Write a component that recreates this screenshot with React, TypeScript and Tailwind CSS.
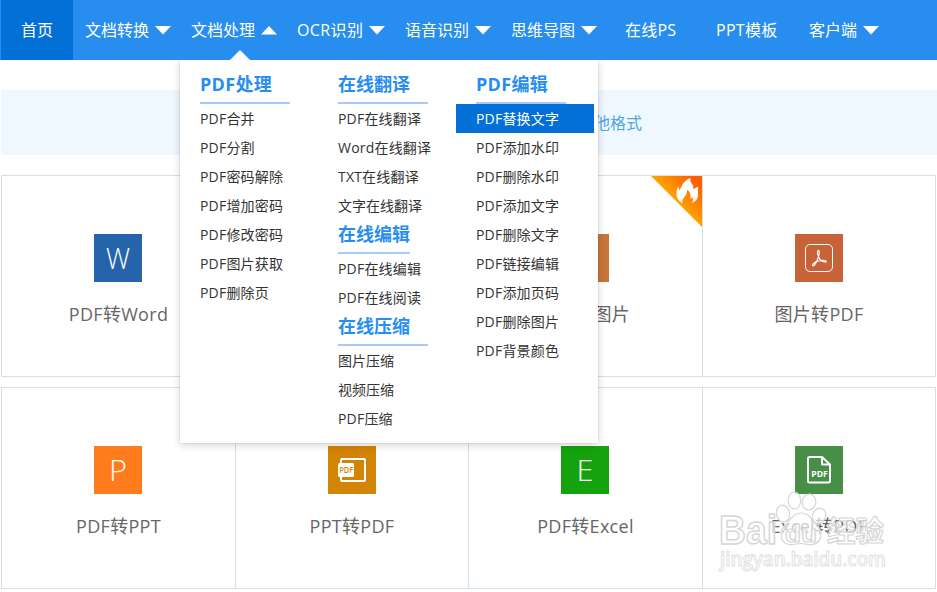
import React from "react";

const navItems = [
  { label: "文档转换", arrow: "down", className: "w-[106px] pl-2.5" },
  { label: "文档处理", arrow: "up", className: "w-[106px] pl-2.5" },
  { label: "OCR识别", arrow: "down", className: "w-[108px] pl-2.5 tracking-[0.4px]" },
  { label: "语音识别", arrow: "down", className: "w-[106px] pl-2.5" },
  { label: "思维导图", arrow: "down", className: "w-[106px] pl-2.5" },
  { label: "在线PS", arrow: "", className: "w-[91px] pl-[18px] tracking-[0.2px]" },
  { label: "PPT模板", arrow: "", className: "w-[101px] pl-[18px] tracking-[0.3px]" },
  { label: "客户端", arrow: "down", className: "w-[106px] pl-2.5" },
];

const menu = [
  [
    {
      title: "PDF处理",
      line: "w-[90px]",
      items: [
        "PDF合并",
        "PDF分割",
        "PDF密码解除",
        "PDF增加密码",
        "PDF修改密码",
        "PDF图片获取",
        "PDF删除页",
      ],
    },
  ],
  [
    {
      title: "在线翻译",
      line: "w-[90px]",
      items: ["PDF在线翻译", "Word在线翻译", "TXT在线翻译", "文字在线翻译"],
    },
    {
      title: "在线编辑",
      line: "w-[72px]",
      items: ["PDF在线编辑", "PDF在线阅读"],
    },
    {
      title: "在线压缩",
      line: "w-[90px]",
      items: ["图片压缩", "视频压缩", "PDF压缩"],
    },
  ],
  [
    {
      title: "PDF编辑",
      line: "w-[90px]",
      items: [
        "PDF替换文字",
        "PDF添加水印",
        "PDF删除水印",
        "PDF添加文字",
        "PDF删除文字",
        "PDF链接编辑",
        "PDF添加页码",
        "PDF删除图片",
        "PDF背景颜色",
      ],
    },
  ],
];

const activeItem = "PDF替换文字";

function Letter({ children, width, y = 35 }: { children: string; width: number; y?: number }) {
  return (
    <text
      x="24"
      y={y}
      textAnchor="middle"
      fontSize="30"
      fontWeight="300"
      fill="#fff"
      textLength={width}
      lengthAdjust="spacingAndGlyphs"
    >
      {children}
    </text>
  );
}

function AcrobatIcon() {
  return (
    <g fill="none" stroke="#fff" strokeWidth="1">
      <rect x="10.500" y="10.500" width="27" height="27" rx="4.500" />
      <path
        strokeWidth="1.200"
        d="M22.800 17c1-1.600 2 .2 1.100 4.200-1 4-3.400 8.800-4.900 10.300-1.200 1-2.200-.4-.6-1.900 2.400-2.100 7.200-3.400 11-3.100 2.600.3 2.400 1.900.1 1.500-2.600-.4-4.900-2.800-5.900-5.300-1-2.400-1.300-4.700-.8-5.700z"
      />
    </g>
  );
}

function PdfSlideIcon() {
  return (
    <g>
      <rect x="13" y="13" width="24" height="22" rx="1" fill="none" stroke="#fff" strokeWidth="2" />
      <rect x="10" y="17" width="16" height="14" rx="1.500" fill="#fff" />
      <text
        x="18.200"
        y="27"
        textAnchor="middle"
        fontSize="8"
        fontWeight="600"
        fill="#d48404"
        textLength="14"
        lengthAdjust="spacingAndGlyphs"
      >
        PDF
      </text>
    </g>
  );
}

function PdfFileIcon() {
  return (
    <g>
      <path
        d="M27 11H14.500a1.500 1.500 0 0 0-1.500 1.500v22.500A1.500 1.500 0 0 0 14.500 36.500h19a1.500 1.500 0 0 0 1.500-1.500V18.500zM27 11v7.500h8"
        fill="none"
        stroke="#fff"
        strokeWidth="2"
        strokeLinejoin="round"
      />
      <text
        x="24.500"
        y="30.500"
        textAnchor="middle"
        fontSize="8"
        fontWeight="700"
        fill="#fff"
        textLength="16.500"
        lengthAdjust="spacingAndGlyphs"
      >
        PDF
      </text>
    </g>
  );
}

const cards = [
  [
    { label: "PDF转Word", bg: "bg-[#2564ab]", icon: <Letter width={24}>W</Letter> },
    { label: "Word转PDF", bg: "bg-[#2564ab]", icon: <PdfFileIcon /> },
    { label: "PDF转图片", bg: "bg-[#c8763a]", icon: null, hot: true },
    { label: "图片转PDF", bg: "bg-[#c86239]", icon: <AcrobatIcon /> },
  ],
  [
    { label: "PDF转PPT", bg: "bg-[#ff7b1b]", icon: <Letter width={18}>P</Letter> },
    { label: "PPT转PDF", bg: "bg-[#d48404]", icon: <PdfSlideIcon /> },
    { label: "PDF转Excel", bg: "bg-[#14a30d]", icon: <Letter width={17}>E</Letter> },
    { label: "Excel转PDF", bg: "bg-[#478f47]", icon: <PdfFileIcon /> },
  ],
];

function Arrow({ dir }: { dir: string }) {
  return (
    <svg width="16" height="9" viewBox="0 0 16 9" className="ml-1.5 shrink-0" fill="#fff">
      {dir === "down" ? <path d="M0 0h16L8 8.500z" /> : <path d="M0 8.500h16L8 0z" />}
    </svg>
  );
}

function HotBadge() {
  return (
    <svg width="51" height="51" viewBox="0 0 51 51" className="absolute top-0 right-0">
      <defs>
        <linearGradient id="hot" x1="25" y1="25" x2="51" y2="0" gradientUnits="userSpaceOnUse">
          <stop offset="0" stopColor="#ffa200" />
          <stop offset="0.800" stopColor="#ff5d00" />
        </linearGradient>
      </defs>
      <path d="M0 0h51v51z" fill="url(#hot)" />
      <path
        d="M31.500 27.500C27 24.500 25 21 25.500 16.500c.2-2.500 1-4.500 2-6 .1 2 .5 3 1.300 3.800C31 8.500 34 3.500 39.500 2c-.5 2.500 0 4 1.500 6 1.300 1.800 1.600 3.500 1.300 5.500 1.400-.8 3-2 5.200-3-.9 2.500-.4 4.500-.4 8 0 4-2 7-6.100 8.500 1.200-2.200 1.200-4 .5-6l-1.800 2c.3-4-.8-7.500-3.700-9.500.4 4-1 5.500-3 8-1.800 2.200-2.300 4-1.500 6z"
        fill="#fff"
      />
    </svg>
  );
}

function Watermark() {
  return (
    <svg
      width="174"
      height="90"
      viewBox="0 0 174 90"
      className="absolute left-[717px] top-[490px] pointer-events-none overflow-visible font-['Liberation_Sans','Noto_Sans_CJK_SC',sans-serif]"
      fill="#fff"
      fillOpacity="0.650"
      stroke="#d6d6d6"
      strokeWidth="1.200"
      strokeLinejoin="round"
    >
      <ellipse cx="66" cy="23.500" rx="6.500" ry="8.500" transform="rotate(-10 66 23.500)" />
      <ellipse cx="77.500" cy="10.500" rx="6.200" ry="8.500" />
      <ellipse cx="92" cy="12" rx="6.800" ry="8" transform="rotate(8 92 12)" />
      <ellipse cx="102" cy="26" rx="6.500" ry="8" transform="rotate(20 102 26)" />
      <path d="M84 23c8 0 10 6 15 11 7 7 7 19-4 20.500-4 .4-7-1-11-1s-7 1.400-12 1c-10-1.500-10-13.500-3-20.500 5-5 8-11 15-11z" />
      <text x="2" y="54" fontSize="40" fontWeight="700" strokeWidth="1.500" textLength="58" lengthAdjust="spacingAndGlyphs">
        Bai
      </text>
      <text x="68" y="52" fontSize="23" fontWeight="700" textLength="32" lengthAdjust="spacingAndGlyphs">
        du
      </text>
      <text x="110" y="52" fontSize="29" fontWeight="700" textLength="57" lengthAdjust="spacingAndGlyphs">
        经验
      </text>
      <text
        x="3"
        y="76"
        fontSize="19"
        fontWeight="600"
        stroke="#dedede"
        strokeWidth="0.900"
        textLength="166"
        lengthAdjust="spacingAndGlyphs"
        className="font-['Open_Sans',sans-serif]"
      >
        jingyan.baidu.com
      </text>
    </svg>
  );
}

export default function App() {
  return (
    <div className="relative w-[937px] h-[592px] overflow-hidden bg-white font-['Open_Sans','Noto_Sans_CJK_SC',sans-serif]">
      {/* Barra de navegación */}
      <nav className="flex h-[60px] bg-[#278ef0] pl-px text-base text-white">
        <a className="flex w-[72px] items-center justify-center bg-[#0270d7]">首页</a>
        <div className="flex pl-0.5">
          {navItems.map((item) => (
            <a key={item.label} className={`flex items-center whitespace-nowrap ${item.className}`}>
              {item.label}
              {item.arrow && <Arrow dir={item.arrow} />}
            </a>
          ))}
        </div>
      </nav>

      <div className="mt-[30px] ml-px flex h-[65px] items-center justify-end bg-[#eff7ff] pr-[295px] text-base text-[#4ea6e2]">
        其他格式
      </div>

      <main className="mt-5 ml-px flex w-[935px] flex-col gap-2.5">
        {cards.map((row, i) => (
          <section
            key={i}
            className="grid h-[202px] grid-cols-[234px_233px_234px_234px] border-y border-[#d3e0e4]"
          >
            {row.map((card, j) => (
              <div
                key={card.label}
                className={`relative flex flex-col border-l border-[#d3e0e4] pt-[58px] ${j === 3 ? "border-r" : ""}`}
              >
                {"hot" in card && <HotBadge />}
                <div className={`ml-[92px] h-12 w-12 ${card.bg}`}>
                  <svg width="48" height="48" viewBox="0 0 48 48">
                    {card.icon}
                  </svg>
                </div>
                <p className="mt-[18px] text-center text-lg leading-7 tracking-[0.3px] text-[#666]">
                  {card.label}
                </p>
              </div>
            ))}
          </section>
        ))}
      </main>

      <Watermark />

      {/* Menú desplegable */}
      <svg width="20" height="10" className="absolute left-[230px] top-[50px]">
        <path d="M0 10L10 0l10 10z" fill="#fff" />
      </svg>
      <div className="absolute left-[180px] top-[60px] flex h-[383px] w-[418px] bg-white pt-2.5 shadow-[0_0_0_1px_rgba(0,0,0,0.04),0_2px_8px_rgba(0,0,0,0.18)] [clip-path:inset(0_-12px_-14px_-12px)]">
        {menu.map((column, i) => (
          <div key={i} className="w-[138px]">
            {column.map((group) => (
              <div key={group.title}>
                <h3
                  className={`ml-5 h-[34px] border-b-2 border-[#a6caf9] text-lg leading-[29px] font-bold whitespace-nowrap text-[#278ef0] ${
                    group.title.startsWith("PDF") ? "tracking-[0.3px]" : ""
                  } ${group.line}`}
                >
                  {group.title}
                </h3>
                {group.items.map((item) => (
                  <a
                    key={item}
                    className={`block h-[29px] pl-5 text-sm leading-[29px] whitespace-nowrap ${
                      /[A-Z]/.test(item) ? "tracking-[0.2px]" : ""
                    } ${item === activeItem ? "bg-[#0270d7] text-white" : "text-[#333]"}`}
                  >
                    {item}
                  </a>
                ))}
              </div>
            ))}
          </div>
        ))}
      </div>
    </div>
  );
}
